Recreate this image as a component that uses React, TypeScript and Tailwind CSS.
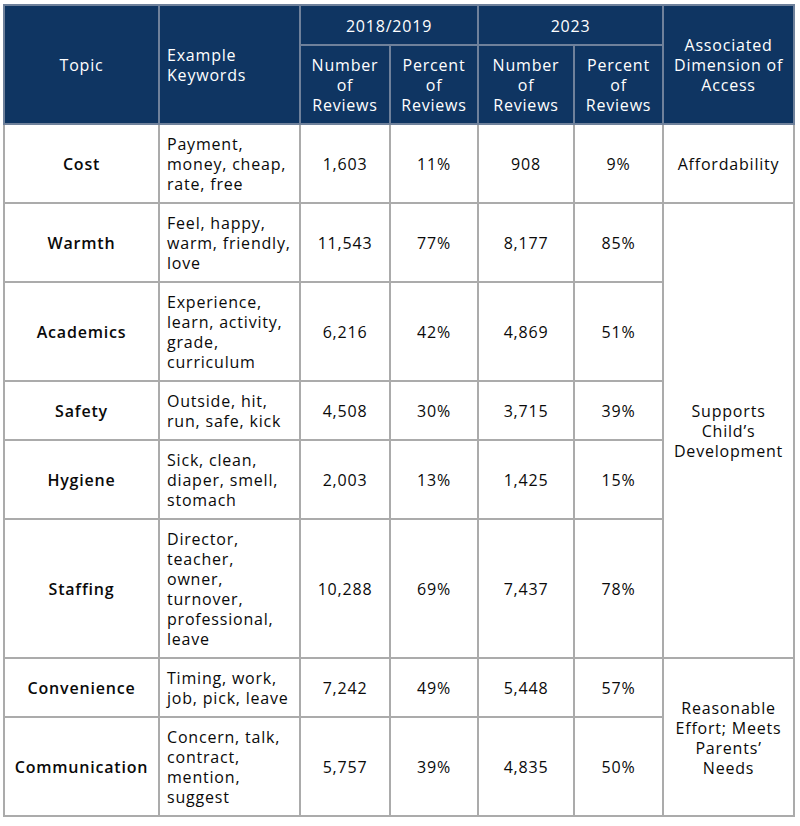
const rows = [
  { topic: "Cost", keywords: ["Payment,", "money, cheap,", "rate, free"], n1: "1,603", p1: "11%", n2: "908", p2: "9%" },
  { topic: "Warmth", keywords: ["Feel, happy,", "warm, friendly,", "love"], n1: "11,543", p1: "77%", n2: "8,177", p2: "85%" },
  { topic: "Academics", keywords: ["Experience,", "learn, activity,", "grade,", "curriculum"], n1: "6,216", p1: "42%", n2: "4,869", p2: "51%" },
  { topic: "Safety", keywords: ["Outside, hit,", "run, safe, kick"], n1: "4,508", p1: "30%", n2: "3,715", p2: "39%" },
  { topic: "Hygiene", keywords: ["Sick, clean,", "diaper, smell,", "stomach"], n1: "2,003", p1: "13%", n2: "1,425", p2: "15%" },
  { topic: "Staffing", keywords: ["Director,", "teacher,", "owner,", "turnover,", "professional,", "leave"], n1: "10,288", p1: "69%", n2: "7,437", p2: "78%" },
  { topic: "Convenience", keywords: ["Timing, work,", "job, pick, leave"], n1: "7,242", p1: "49%", n2: "5,448", p2: "57%" },
  { topic: "Communication", keywords: ["Concern, talk,", "contract,", "mention,", "suggest"], n1: "5,757", p1: "39%", n2: "4,835", p2: "50%" },
];

// which rows start a merged "dimension" cell, and how many rows it covers
const dims: Record<number, { span: number; lines: string[] }> = {
  0: { span: 1, lines: ["Affordability"] },
  1: { span: 5, lines: ["Supports", "Child\u2019s", "Development"] },
  6: { span: 2, lines: ["Reasonable", "Effort; Meets", "Parents\u2019", "Needs"] },
};

const th = "border-2 border-[#6f819b] bg-[#0f3562] text-white font-medium align-middle pt-[9px] pb-[8px]";
const td = "border-2 border-[#ababab] align-middle pt-[9px] pb-[8px]";

export default function App() {
  return (
    <div className="bg-white w-[800px] h-[826px] pt-[4px] pl-[3px]" style={{ fontFamily: '"Open Sans", "Liberation Sans", sans-serif' }}>
      <table className="border-collapse table-fixed w-[790px] text-[16px] leading-[20px] tracking-[0.8px] text-[#0a0a0a]">
        <colgroup>
          <col className="w-[155px]" />
          <col className="w-[141px]" />
          <col className="w-[90px]" />
          <col className="w-[88px]" />
          <col className="w-[96px]" />
          <col className="w-[89px]" />
          <col className="w-[131px]" />
        </colgroup>
        <thead>
          <tr>
            <th rowSpan={2} className={`${th} text-center`}>Topic</th>
            <th rowSpan={2} className={`${th} text-left pl-[7px]`}>
              Example<br />Keywords
            </th>
            <th colSpan={2} className={`${th} text-center pt-[10px]`}>2018/2019</th>
            <th colSpan={2} className={`${th} text-center pt-[10px]`}>2023</th>
            <th rowSpan={2} className={`${th} text-center`}>
              Associated<br />Dimension of<br />Access
            </th>
          </tr>
          <tr>
            <th className={`${th} text-center`}>Number<br />of<br />Reviews</th>
            <th className={`${th} text-center`}>Percent<br />of<br />Reviews</th>
            <th className={`${th} text-center`}>Number<br />of<br />Reviews</th>
            <th className={`${th} text-center`}>Percent<br />of<br />Reviews</th>
          </tr>
        </thead>
        <tbody>
          {rows.map((r, i) => (
            <tr key={r.topic}>
              <td className={`${td} text-center font-semibold`}>{r.topic}</td>
              <td className={`${td} text-left pl-[7px]`}>
                {r.keywords.map((k) => (
                  <div key={k} className="whitespace-nowrap">{k}</div>
                ))}
              </td>
              <td className={`${td} text-center`}>{r.n1}</td>
              <td className={`${td} text-center`}>{r.p1}</td>
              <td className={`${td} text-center`}>{r.n2}</td>
              <td className={`${td} text-center`}>{r.p2}</td>
              {dims[i] && (
                <td rowSpan={dims[i].span} className={`${td} text-center`}>
                  {dims[i].lines.map((l) => (
                    <div key={l} className="whitespace-nowrap">{l}</div>
                  ))}
                </td>
              )}
            </tr>
          ))}
        </tbody>
      </table>
    </div>
  );
}
